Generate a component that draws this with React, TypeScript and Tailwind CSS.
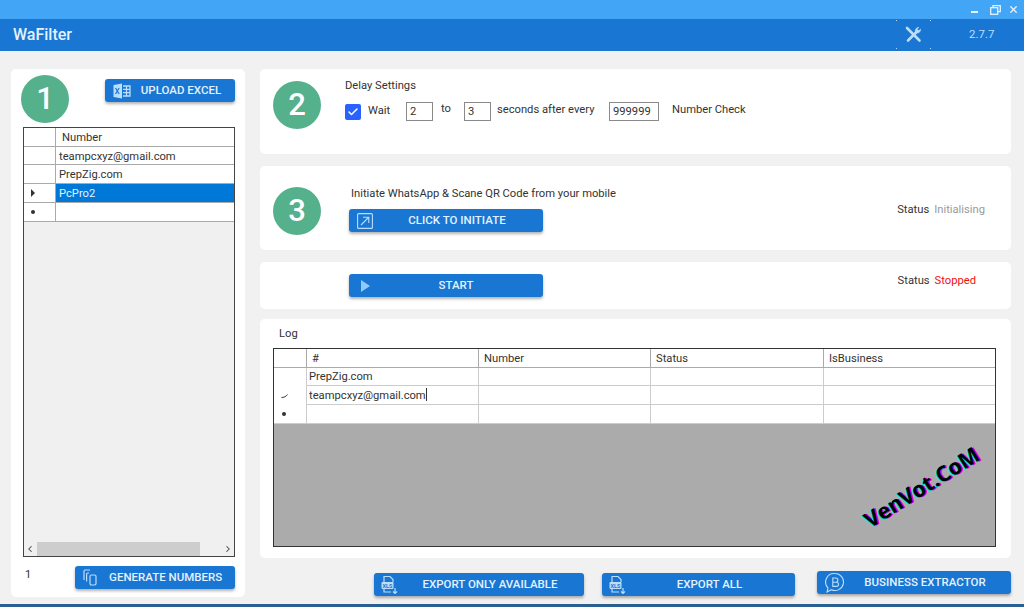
import React from "react";
import { Check, ChevronLeft, ChevronRight, X } from "lucide-react";

const XlsIcon = () => (
  <svg width="18" height="20" viewBox="0 0 18 20" fill="none" stroke="#bbdefb" strokeWidth="1.2" className="-ml-[2px]">
    <path d="M4 7V1.5h6l3 3V7M4 14v3h7" />
    <rect x="1.5" y="7" width="12" height="7" rx="1" fill="#bbdefb" stroke="none" />
    <path d="M15 13v5M13 16.5l2 2 2-2" />
    <text x="2.6" y="12.6" fontSize="5.5" fontWeight="700" fill="#1976d2" stroke="none" fontFamily="Roboto, sans-serif">XLS</text>
  </svg>
);

const ExcelIcon = () => (
  <svg width="18" height="16" viewBox="0 0 18 16">
    <path d="M0.5 2 9 0.5v15L0.5 14z" fill="#bbdefb" />
    <path d="M2.5 5l3.6 6M6.1 5l-3.6 6" stroke="#1976d2" strokeWidth="1.2" />
    <path d="M10 3h7v10h-7M10 6.3h7M10 9.6h7M13.5 3v10" stroke="#bbdefb" strokeWidth="1.3" fill="none" />
  </svg>
);

const BusinessIcon = () => (
  <svg width="20" height="22" viewBox="0 0 20 22" fill="none" stroke="#bbdefb" strokeWidth="1.1">
    <path d="M10 1.5a8.5 8.5 0 1 1-3.6 16.2L2 20l1-4.2A8.5 8.5 0 0 1 10 1.5z" />
    <path d="M7.8 6h3a2 2 0 0 1 0 4.2h-3zM7.8 10.2h3.6a2.1 2.1 0 0 1 0 4.2H7.8z" />
  </svg>
);

const DocsIcon = () => (
  <svg width="14" height="17" viewBox="0 0 14 17" fill="none" stroke="#bbdefb" strokeWidth="1.2">
    <path d="M1 11V2.2A1.2 1.2 0 0 1 2.2 1H7" />
    <path d="M3.6 12.5V5a1 1 0 0 1 1-1H6" />
    <rect x="7" y="6" width="6" height="10" rx="1.4" />
  </svg>
);

const InitiateIcon = () => (
  <svg width="16" height="16" viewBox="0 0 16 16" fill="none" stroke="#bbdefb" strokeWidth="1.1">
    <rect x="0.6" y="0.6" width="14.8" height="14.8" rx="1" />
    <path d="M4 12 11.5 4.5M6 4.2h5.8V10" />
  </svg>
);

const PlayIcon = () => (
  <svg width="9" height="12" viewBox="0 0 9 12" className="ml-1"><path d="M0 0 9 6 0 12z" fill="#90caf9" /></svg>
);

const ToolsIcon = () => (
  <svg width="17" height="17" viewBox="0 0 17 17" fill="none" stroke="#bbdefb" strokeLinecap="round">
    <path d="M2 2 14.5 14.5" strokeWidth="2.6" />
    <path d="M3 14.5 11 6.5" strokeWidth="2.6" />
    <path d="M15.6 3.4a3.4 3.4 0 0 1-4.2 3.6l-0.9-1a3.4 3.4 0 0 1 3.4-4.6L12 3.2l1.4 1.4z" fill="#bbdefb" strokeWidth="0.6" />
  </svg>
);

const Step = ({ n }: { n: number }) => (
  <div className="flex h-12 w-12 shrink-0 items-center justify-center rounded-full bg-[#55b08c] text-[31px] font-medium text-white">{n}</div>
);

const Btn = ({ icon, label, className }: { icon: React.ReactNode; label: string; className: string }) => (
  <div className={`relative flex h-[23px] shrink-0 items-center justify-center rounded-[3px] bg-[#1976d2] text-[11.5px] font-medium text-[#e3f2fd] shadow-[0_2px_3px_rgba(0,0,0,0.3)] ${className}`}>
    <span className="absolute left-2 top-0 flex h-full items-center">{icon}</span>
    {label}
  </div>
);

const Field = ({ value, width }: { value: string; width: string }) => (
  <div className={`flex h-[19px] shrink-0 items-center border border-[#8a8a8a] pl-[3px] leading-none ${width}`}>{value}</div>
);

const Arrow = () => <div className="h-0 w-0 border-y-[4px] border-l-[4px] border-y-transparent border-l-[#333]" />;
const Star = () => <div className="h-1 w-1 rounded-full bg-[#333]" />;

const numberRows: { text: string; mark?: React.ReactNode; selected?: boolean; h: string }[] = [
  { text: "teampcxyz@gmail.com", h: "h-[18px]" },
  { text: "PrepZig.com", h: "h-[19px]" },
  { text: "PcPro2", mark: <Arrow />, selected: true, h: "h-[19px]" },
  { text: "", mark: <Star />, h: "h-[19px]" },
];

const logRows: { text: string; mark?: React.ReactNode; h: string }[] = [
  { text: "PrepZig.com", h: "h-[18px]" },
  {
    text: "teampcxyz@gmail.com",
    mark: <svg width="7" height="4" viewBox="0 0 7 4"><path d="M0.5 3.5 C3 3.5 5 2.5 6.5 0.5" stroke="#333" strokeWidth="1" fill="none" /></svg>,
    h: "h-[19px]",
  },
  { text: "", mark: <Star />, h: "h-[19px]" },
];

const Card = ({ className, children }: { className: string; children: React.ReactNode }) => (
  <div className={`rounded-[5px] bg-white ${className}`}>{children}</div>
);

export default function App() {
  return (
    <div className="flex h-[607px] w-[1024px] flex-col overflow-hidden bg-[#f2f1f1] font-['Roboto',sans-serif] text-[11.2px] text-[#333]">
      <div className="flex h-[19px] shrink-0 items-center justify-end bg-[#42a5f5] pr-[5px] text-[#e3f2fd]">
        <div className="mt-1 h-[2px] w-[7px] bg-[#e3f2fd]" />
        <svg width="11" height="10" viewBox="0 0 11 10" fill="none" stroke="currentColor" strokeWidth="1.3" className="ml-[12px]">
          <rect x="0.7" y="2.7" width="7" height="6.6" />
          <path d="M3 2.7V0.7h7.3v6H7.7" />
        </svg>
        <X size={11} strokeWidth={3} className="ml-[7px]" />
      </div>

      <div className="flex h-8 shrink-0 items-center bg-[#1976d2] pl-[13px] text-white">
        <div className="-mt-[1px] text-base font-medium text-[#e3f2fd]">WaFilter</div>
        <div className="relative -mt-[2px] ml-[824px] flex h-[29px] w-[35px] items-center justify-center">
          <ToolsIcon />
          <span className="absolute left-0 top-0 h-px w-px bg-[#bbdefb]" />
          <span className="absolute right-0 top-0 h-px w-px bg-[#bbdefb]" />
          <span className="absolute bottom-0 left-0 h-px w-px bg-[#bbdefb]" />
          <span className="absolute bottom-0 right-0 h-px w-px bg-[#bbdefb]" />
        </div>
        <div className="ml-[38px] text-[11.5px] text-[#bbdefb]">2.7.7</div>
      </div>

      <div className="flex min-h-0 flex-1 gap-[15px] pl-[11px] pt-[18px]">
        <Card className="flex h-[528px] w-[234px] flex-col pl-3">
          <div className="flex h-[58px] items-start pt-1.5">
            <div className="-ml-[2px]"><Step n={1} /></div>
            <Btn icon={<ExcelIcon />} label="UPLOAD EXCEL" className="ml-[36px] mt-1 w-[130px] pl-[22px]" />
          </div>
          <div className="flex h-[430px] w-[212px] flex-col border border-[#444] bg-[#f0f0f0]">
            <div className="flex h-[19px] border-b border-[#aaa] bg-white">
              <div className="w-8 border-r border-[#aaa]" />
              <div className="pl-[6px] leading-[20px]">Number</div>
            </div>
            {numberRows.map((row) => (
              <div key={row.text + row.h} className={`flex border-b border-[#aaa] bg-white ${row.h}`}>
                <div className="flex w-8 items-center justify-center border-r border-[#aaa] pr-[14px]">{row.mark}</div>
                <div className={`flex-1 pl-[3px] leading-[19px] ${row.selected ? "bg-[#0078d7] text-[#e3f2fd]" : ""}`}>{row.text}</div>
              </div>
            ))}
            <div className="mt-auto flex h-[14px] items-center bg-[#f0f0f0] px-[1px] text-[#444]">
              <ChevronLeft size={10} strokeWidth={2.5} />
              <div className="ml-[2px] h-full w-[163px] bg-[#cdcdcd]" />
              <ChevronRight size={10} strokeWidth={2.5} className="ml-auto" />
            </div>
          </div>
          <div className="flex items-start">
            <div className="mt-[10px] pl-[2px] text-[11px]">1</div>
            <Btn icon={<DocsIcon />} label="GENERATE NUMBERS" className="ml-[44px] mt-[9px] w-[160px] pl-[21px] text-[11.2px]" />
          </div>
        </Card>

        <div className="flex w-[751px] flex-col">
          <Card className="flex h-[85px] gap-[24px] pl-[13px] pt-3">
            <Step n={2} />
            <div className="-mt-[2px]">
              <div className="leading-[14px]">Delay Settings</div>
              <div className="mt-[9px] flex h-[19px] items-center">
                <div className="flex h-4 w-4 items-center justify-center rounded-[2px] bg-[#2962ff]">
                  <Check size={12} strokeWidth={3} className="text-white" />
                </div>
                <span className="ml-[7px] w-[23px]">Wait</span>
                <Field value="2" width="ml-[15px] w-[27px]" />
                <span className="ml-[8px] -mt-1 w-[10px]">to</span>
                <Field value="3" width="ml-[13px] w-[27px]" />
                <span className="ml-[6px] -mt-[3px] w-[96px] whitespace-nowrap">seconds after every</span>
                <Field value="999999" width="ml-[16px] w-[50px]" />
                <span className="ml-[13px] -mt-[3px]">Number Check</span>
              </div>
            </div>
          </Card>

          <Card className="mt-3 flex h-[84px] pl-[13px] pt-[21px]">
            <Step n={3} />
            <div className="ml-[28px]">
              <div className="ml-[2px] leading-[14px]">Initiate WhatsApp &amp; Scane QR Code from your mobile</div>
              <Btn icon={<InitiateIcon />} label="CLICK TO INITIATE" className="mt-[8px] w-[194px] pl-[22px]" />
            </div>
            <div className="ml-auto mr-[26px] mt-4 flex h-[14px] gap-[5px] leading-[14px]">
              <span>Status</span>
              <span className="text-[#9a9a9a]">Initialising</span>
            </div>
          </Card>

          <Card className="mt-3 flex h-[47px] pl-[89px] pt-[12px]">
            <Btn icon={<PlayIcon />} label="START" className="w-[194px] pl-[20px]" />
            <div className="ml-auto mr-[35px] flex h-[14px] gap-[5px] leading-[14px]">
              <span>Status</span>
              <span className="text-[#f01010]">Stopped</span>
            </div>
          </Card>

          <Card className="relative mt-[10px] h-[239px] px-[13px] pt-2">
            <div className="ml-[6px] h-[21px] leading-[14px]">Log</div>
            <div className="flex h-[199px] w-[723px] flex-col border border-[#333] bg-[#ababab]">
              <div className="grid h-[19px] grid-cols-[33px_172px_172px_173px_1fr] border-b border-[#aaa] bg-white leading-[20px]">
                <div className="border-r border-[#aaa]" />
                <div className="border-r border-[#aaa] pl-[5px]">#</div>
                <div className="border-r border-[#aaa] pl-[5px]">Number</div>
                <div className="border-r border-[#aaa] pl-[5px]">Status</div>
                <div className="pl-[5px]">IsBusiness</div>
              </div>
              {logRows.map((row) => (
                <div key={row.text + row.h} className={`grid grid-cols-[33px_172px_172px_173px_1fr] border-b border-[#ccc] bg-white ${row.h}`}>
                  <div className="flex items-center justify-center border-r border-[#ccc] bg-white pr-[12px]">{row.mark}</div>
                  <div className="border-r border-[#ccc] pl-[2px] leading-[18px]">
                    {row.text}
                    {row.mark && row.text ? <span className="inline-block h-[13px] w-px translate-y-[2px] bg-[#333]" /> : null}
                  </div>
                  <div className="border-r border-[#ccc]" />
                  <div className="border-r border-[#ccc]" />
                  <div />
                </div>
              ))}
            </div>
            <div className="absolute left-[596px] top-[157px] -rotate-[32deg] font-['Open_Sans',sans-serif] text-[21.5px] font-bold leading-none text-black [text-shadow:-1.5px_0_0_#00d8d8,1.5px_1px_0_#e000e0]">
              VenVot.CoM
            </div>
          </Card>

          <div className="mt-[14px] flex items-start">
            <Btn icon={<XlsIcon />} label="EXPORT ONLY AVAILABLE" className="ml-[114px] mt-px w-[210px] pl-[22px]" />
            <Btn icon={<XlsIcon />} label="EXPORT ALL" className="ml-[18px] mt-px w-[193px] pl-[22px]" />
            <Btn icon={<BusinessIcon />} label="BUSINESS EXTRACTOR" className="ml-[22px] -mt-[1px] w-[194px] pl-[22px]" />
          </div>
        </div>
      </div>

      <div className="h-[3px] shrink-0 bg-[#2a5f91]" />
    </div>
  );
}
